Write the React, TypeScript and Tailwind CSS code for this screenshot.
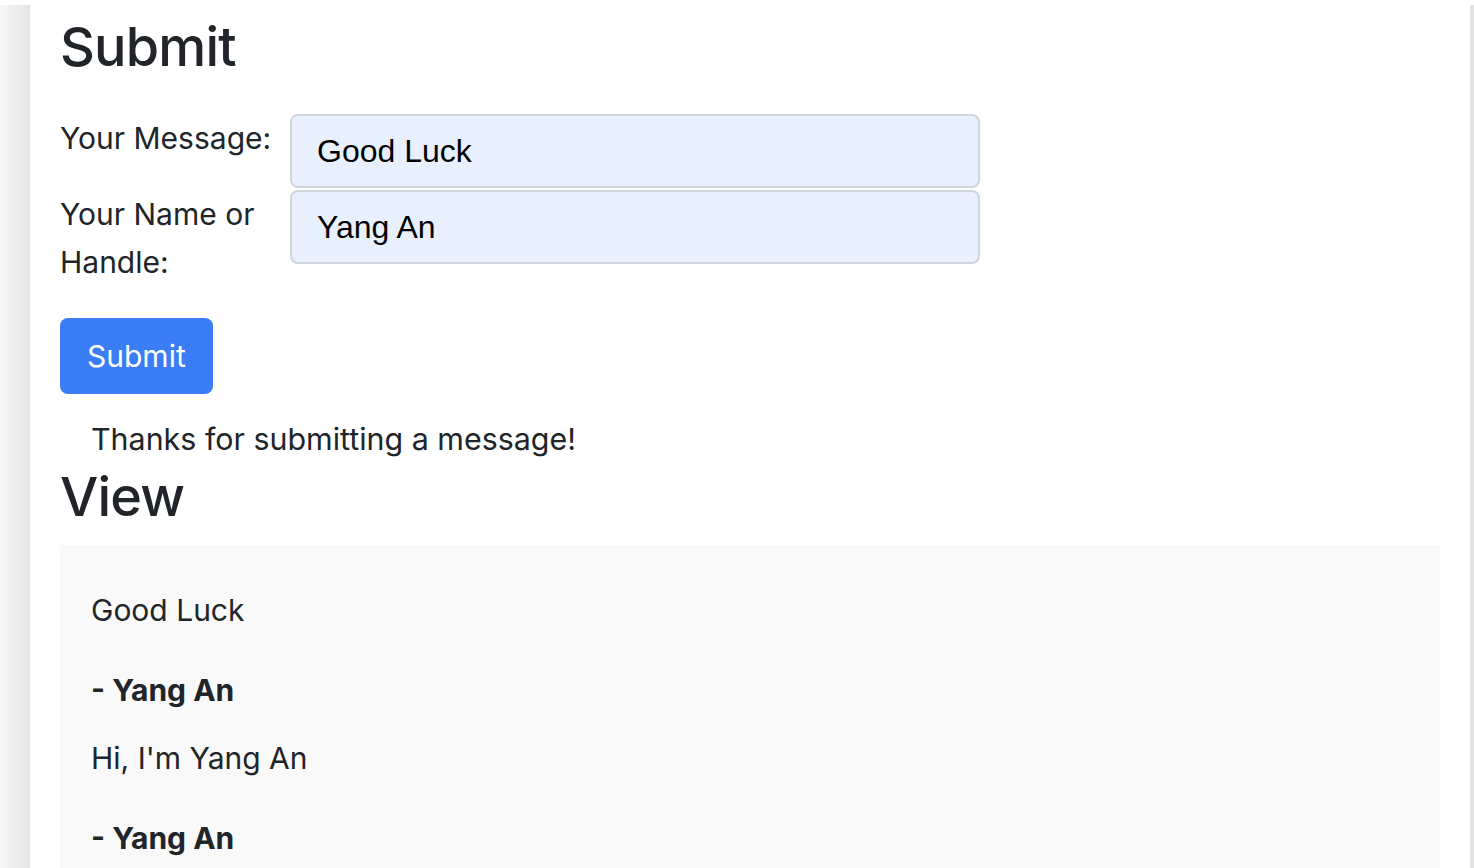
export default function App() {
  const messages = [
    { text: "Good Luck", author: "Yang An" },
    { text: "Hi, I'm Yang An", author: "Yang An" },
  ]

  return (
    <div className="h-screen overflow-hidden bg-white pt-[5px] text-[#212529] font-['Inter','Liberation_Sans',sans-serif]">
      <div className="flex h-full">
        {/* left gutter shadow */}
        <div className="w-[30px] shrink-0 bg-gradient-to-r from-[#f7f7f7] to-[#e4e4e4]" />

        <main className="flex-1 px-[30px] overflow-hidden">
          <h2 className="text-[54px] leading-[67px] font-medium tracking-[-0.8px] mt-[8px] mb-[34px]">Submit</h2>

          <form className="flex flex-col gap-[2px]" onSubmit={(e) => e.preventDefault()}>
            <div className="flex">
              <label className="w-[230px] text-[30px] leading-[48px]">Your Message:</label>
              <input
                defaultValue="Good Luck"
                className="w-[690px] h-[74px] rounded-lg border-2 border-[#cfd5dc] bg-[#e8f0fe] px-[25px] text-[32px] text-black font-['Liberation_Sans',Arial,sans-serif] outline-none"
              />
            </div>
            <div className="flex">
              <label className="w-[230px] text-[30px] leading-[48px]">
                Your Name or
                <br />
                Handle:
              </label>
              <input
                defaultValue="Yang An"
                className="w-[690px] h-[74px] rounded-lg border-2 border-[#cfd5dc] bg-[#e8f0fe] px-[25px] text-[32px] text-black font-['Liberation_Sans',Arial,sans-serif] outline-none"
              />
            </div>
            <div className="mt-[30px]">
              <button className="h-[76px] px-[27px] rounded-lg bg-[#3b7df7] text-white text-[30px] leading-[48px]">
                Submit
              </button>
            </div>
          </form>

          <p className="mt-[21px] pl-[31px] text-[30.4px] leading-[48px]">Thanks for submitting a message!</p>

          <h2 className="text-[54px] leading-[67px] font-medium tracking-[-0.8px] mb-[15px]">View</h2>

          <section className="bg-[#f9f9f9] px-[31px] pt-[41px] pb-[40px]">
            {messages.map((m, i) => (
              <div key={i}>
                <p className="text-[30px] leading-[48px] mb-[32px]">{m.text}</p>
                <p className="text-[30px] leading-[48px] font-bold mb-[20px]">- {m.author}</p>
              </div>
            ))}
          </section>
        </main>

        <div className="w-[4px] shrink-0 bg-[#e4e4e4]" />
      </div>
    </div>
  )
}
